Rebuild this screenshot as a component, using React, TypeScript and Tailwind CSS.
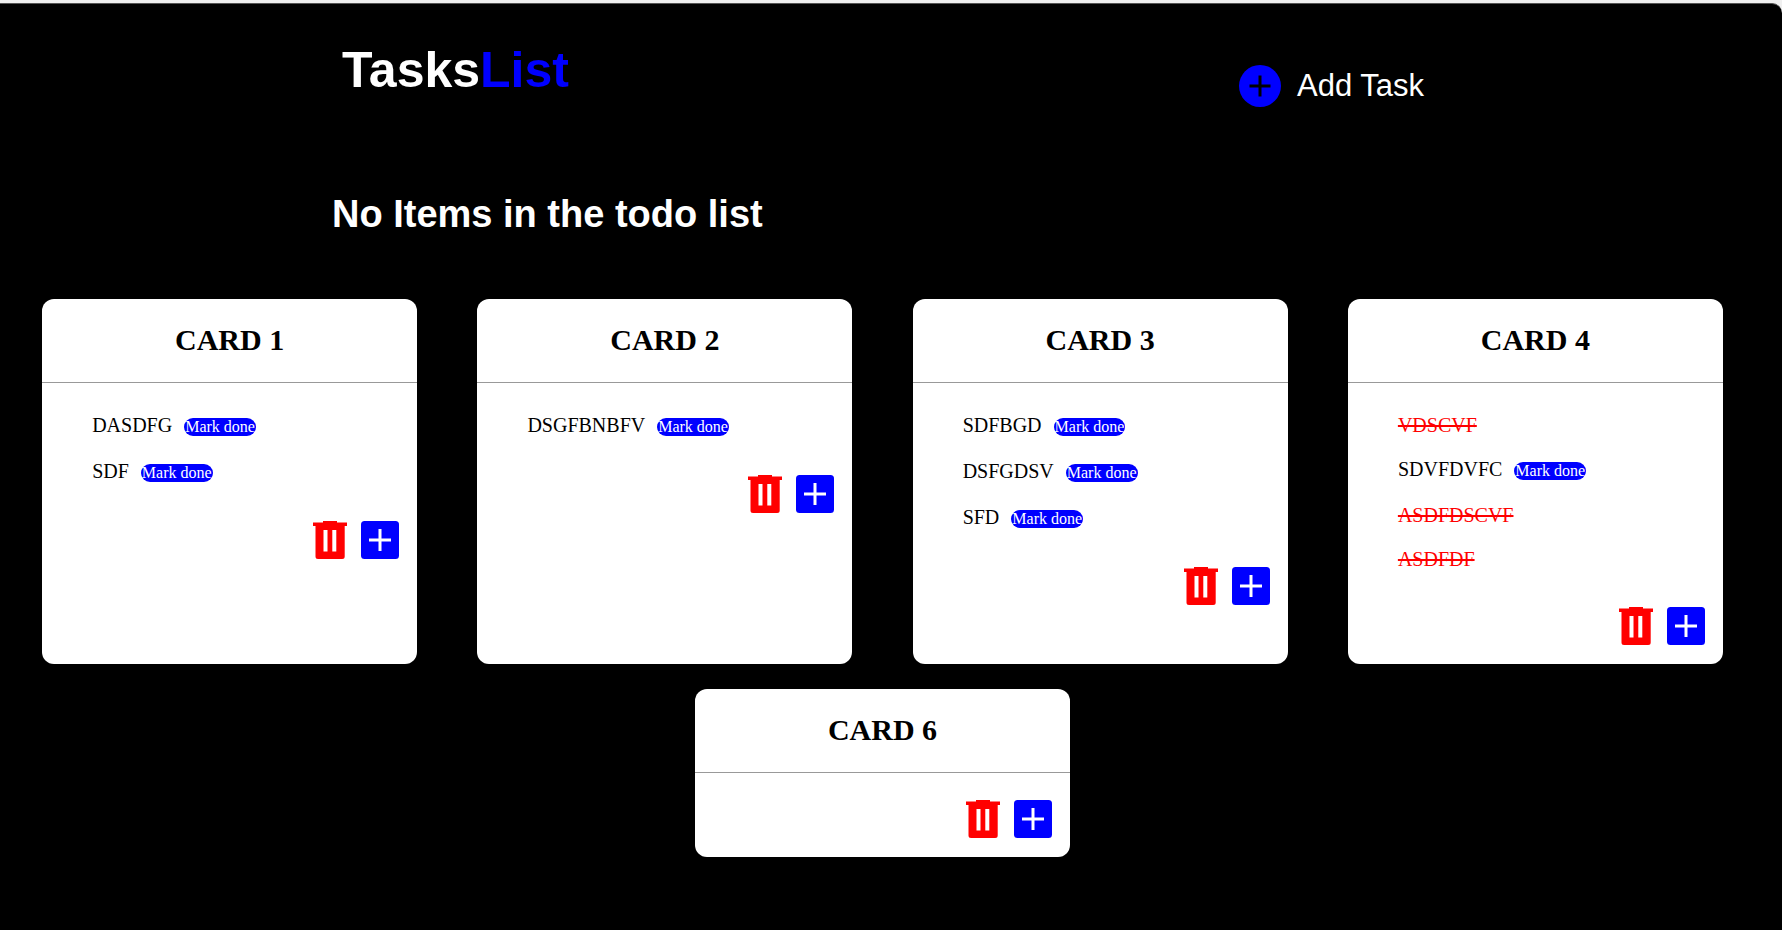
import React from "react";

type Task = { text: string; done?: boolean };
type Card = { title: string; tasks: Task[] };

const cards: Card[] = [
  { title: "CARD 1", tasks: [{ text: "DASDFG" }, { text: "SDF" }] },
  { title: "CARD 2", tasks: [{ text: "DSGFBNBFV" }] },
  { title: "CARD 3", tasks: [{ text: "SDFBGD" }, { text: "DSFGDSV" }, { text: "SFD" }] },
  {
    title: "CARD 4",
    tasks: [
      { text: "VDSCVF", done: true },
      { text: "SDVFDVFC" },
      { text: "ASDFDSCVF", done: true },
      { text: "ASDFDF", done: true },
    ],
  },
  { title: "CARD 6", tasks: [] },
];

function TrashIcon() {
  return (
    <svg viewBox="0 0 34 38" className="h-[38px] w-[34px]" aria-hidden="true">
      <path fill="#ff0000" d="M10 0h14v1.500h10v3.500h-2.300v30.500a2.500 2.500 0 0 1-2.500 2.500H5a2.500 2.500 0 0 1-2.500-2.500V5H0V1.500h10z" />
      <path fill="#ffffff" d="M10.500 9h4v21.500h-4zM19.300 9h4v21.500h-4z" />
    </svg>
  );
}

function PlusBoxIcon() {
  return (
    <svg viewBox="0 0 38 38" className="size-[38px]" aria-hidden="true">
      <rect width="38" height="38" rx="3.5" fill="#0000ff" />
      <path fill="#ffffff" d="M17.500 8h3v9.500h9.500v3h-9.500v9.500h-3v-9.500H8v-3h9.500z" />
    </svg>
  );
}

function PlusCircleIcon() {
  return (
    <svg viewBox="0 0 42 42" className="size-[42px]" aria-hidden="true">
      <circle cx="21" cy="21" r="21" fill="#0000ff" />
      <path fill="#000000" d="M19.500 10.500h3v9h9v3h-9v9h-3v-9h-9v-3h9z" />
    </svg>
  );
}

function TaskList({ tasks }: { tasks: Task[] }) {
  return (
    <ul className="flex flex-col pt-[31px] pb-[15px] pl-[50px] text-[20px] leading-[22px]">
      {tasks.map((task) =>
        task.done ? (
          <li key={task.text} className="pb-[22px] text-[#ff0000]">
            <s className="block decoration-2">{task.text}</s>
          </li>
        ) : (
          <li key={task.text} className="flex items-end gap-3 pb-6">
            {task.text}
            <button type="button" className="h-[18px] rounded-[10px] bg-[#0000ff] px-px text-[16px] leading-[18px] text-white">
              Mark done
            </button>
          </li>
        ),
      )}
    </ul>
  );
}

function TaskCard({ card }: { card: Card }) {
  return (
    <section className="w-[375px] rounded-[12px] bg-white pb-[19px] text-black">
      <h3 className="border-b border-[#999999] pt-6 pb-[25px] text-center text-[30px] leading-[34px] font-bold">
        {card.title}
      </h3>
      {card.tasks.length > 0 ? <TaskList tasks={card.tasks} /> : <div className="h-[27px]" />}
      <div className="flex justify-end gap-[14px] pr-[18px]">
        <button type="button" aria-label={"Delete " + card.title}>
          <TrashIcon />
        </button>
        <button type="button" aria-label={"Add item to " + card.title}>
          <PlusBoxIcon />
        </button>
      </div>
    </section>
  );
}

export default function App() {
  return (
    <div className="flex min-h-screen flex-col bg-[#f0f0f0] pt-[3px] font-['Liberation_Serif',serif]">
      <main className="flex-1 rounded-tr-[10px] border-t border-[#555555] bg-black pb-10 text-white">
        <header className="flex items-start justify-between pt-[37px] pr-[358px] pl-[342px] font-['Liberation_Sans',sans-serif]">
          <h1 className="text-[50px] leading-[58px] font-bold">
            Tasks<span className="text-[#0000ff]">List</span>
          </h1>
          <button type="button" className="flex items-center gap-4 pt-6 text-[31px] leading-10">
            <PlusCircleIcon />
            Add Task
          </button>
        </header>
        <h2 className="pt-[85px] pl-[332px] font-['Liberation_Sans',sans-serif] text-[38px] leading-[44px] font-bold">
          No Items in the todo list
        </h2>
        <div className="flex flex-wrap justify-around gap-y-[25px] pt-[63px] pr-[29px] pl-3">
          {cards.map((card) => (
            <TaskCard key={card.title} card={card} />
          ))}
        </div>
      </main>
    </div>
  );
}
